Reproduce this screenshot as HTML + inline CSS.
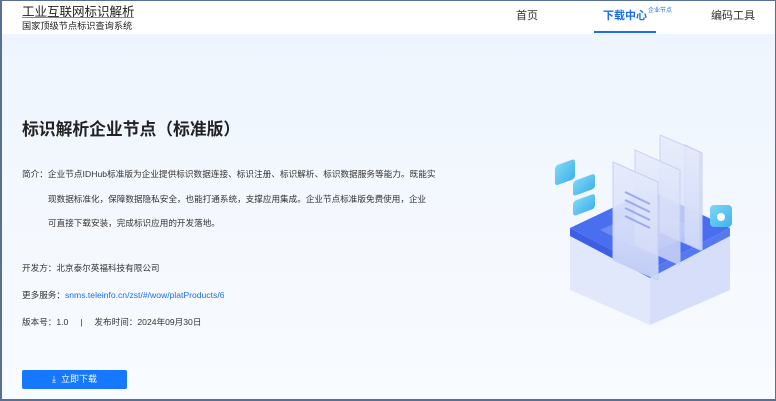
<!DOCTYPE html>
<html><head><meta charset="utf-8"><style>
*{margin:0;padding:0;box-sizing:border-box}
body{width:776px;height:401px;overflow:hidden;font-family:"Liberation Sans","Noto Sans CJK SC",sans-serif;color:#333;position:relative;background:#fff}
.frame{position:absolute;inset:0;border:1px solid #5a6f95;border-left-width:2px;border-bottom-width:2px;pointer-events:none;z-index:10}
.hdr{position:absolute;left:0;top:0;width:776px;height:34px;background:#fff}
.main{position:absolute;left:0;top:34px;width:776px;height:367px;background:linear-gradient(180deg,#eef5fe 0%,#f5f9fe 60%,#f8fbff 100%)}
.t1{position:absolute;left:22px;top:1px;font-size:12.5px;color:#222;white-space:nowrap}
.ln{position:absolute;left:22px;top:17px;width:112px;height:1px;background:#888}
.t2{position:absolute;left:22px;top:18px;font-size:9.2px;color:#222;white-space:nowrap}
.nav{position:absolute;top:7px;font-size:11px;color:#333;white-space:nowrap}
.act{color:#1a6ef5;font-weight:bold}
.sup{position:absolute;left:648px;top:5px;font-size:6px;color:#1a6ef5}
.ul{position:absolute;left:594px;top:31px;width:62px;height:2px;background:#1a6ef5}
.h1{position:absolute;left:22px;top:116px;font-size:16.8px;font-weight:bold;color:#222;white-space:nowrap}
.p{position:absolute;font-size:8.6px;color:#333;white-space:nowrap}
a{color:#1a6ef5;text-decoration:none}
.btn{position:absolute;left:22px;top:370px;width:105px;height:19px;background:#1677ff;border-radius:2px;color:#fff;font-size:9px;text-align:center;line-height:19px}
</style></head><body>
<div class="hdr">
<div class="t1">工业互联网标识解析</div><div class="ln"></div>
<div class="t2">国家顶级节点标识查询系统</div>
<div class="nav" style="left:516px">首页</div>
<div class="nav act" style="left:603px">下载中心</div><div class="sup">企业节点</div>
<div class="ul"></div>
<div class="nav" style="left:711px">编码工具</div>
</div>
<div class="main"></div>
<div class="h1">标识解析企业节点（标准版）</div>
<div class="p" style="left:22px;top:168px;letter-spacing:.05px">简介：企业节点IDHub标准版为企业提供标识数据连接、标识注册、标识解析、标识数据服务等能力。既能实</div>
<div class="p" style="left:48px;top:193px">现数据标准化，保障数据隐私安全，也能打通系统，支撑应用集成。企业节点标准版免费使用，企业</div>
<div class="p" style="left:48px;top:217px">可直接下载安装，完成标识应用的开发落地。</div>
<div class="p" style="left:22px;top:262px">开发方：北京泰尔英福科技有限公司</div>
<div class="p" style="left:22px;top:289px">更多服务：<a>snms.teleinfo.cn/zst/#/wow/platProducts/6</a></div>
<div class="p" style="left:22px;top:316px">版本号：1.0 &nbsp;&nbsp;&nbsp;&nbsp;| &nbsp;&nbsp;&nbsp;&nbsp;发布时间：2024年09月30日</div>
<div class="btn">⤓&nbsp; 立即下载</div>
<svg style="position:absolute;left:530px;top:120px" width="230" height="220" viewBox="0 0 230 220">
<defs>
<linearGradient id="pg" x1="0" y1="0" x2="0" y2="1"><stop offset="0" stop-color="#e6ebfb" stop-opacity=".95"/><stop offset="1" stop-color="#cfd8f7" stop-opacity=".9"/></linearGradient>
<linearGradient id="cy" x1="0" y1="0" x2="1" y2="1"><stop offset="0" stop-color="#7fd6f5"/><stop offset="1" stop-color="#3fb2ee"/></linearGradient>
</defs>
<polygon points="40,115 120,150 120,205 40,170" fill="#e2e8fb"/>
<polygon points="120,150 200,115 200,170 120,205" fill="#d6def9"/>
<polygon points="40,108 120,70 200,108 120,150" fill="#4a6ef0"/>
<polygon points="40,108 120,150 120,158 40,116" fill="#3c5fe6"/>
<polygon points="120,150 200,108 200,116 120,158" fill="#5679f0"/>
<polygon points="70,110 120,88 170,110 120,134" fill="#7f98f4" opacity=".7"/>
<polygon points="155,25 172,33 172,130 155,122" fill="url(#pg)" stroke="#c4cff5"/>
<polygon points="130,15 170,32 170,130 130,112" fill="url(#pg)" stroke="#c4cff5" opacity=".85"/>
<polygon points="105,30 150,50 150,145 105,125" fill="url(#pg)" stroke="#c4cff5" opacity=".9"/>
<polygon points="83,42 128,62 128,160 83,140" fill="url(#pg)" stroke="#c4cff5"/>
<g stroke="#9aaaf0" stroke-width="2"><line x1="95" y1="72" x2="120" y2="84"/><line x1="95" y1="80" x2="120" y2="92"/><line x1="95" y1="88" x2="120" y2="100"/><line x1="95" y1="96" x2="120" y2="108"/></g>
<rect x="25" y="40" width="20" height="20" rx="3" fill="url(#cy)" transform="skewY(-20) translate(0,15)"/>
<rect x="35" y="55" width="22" height="15" rx="3" fill="url(#cy)" transform="skewY(-20) translate(8,22)"/>
<rect x="35" y="75" width="22" height="15" rx="3" fill="url(#cy)" transform="skewY(-20) translate(8,22)"/>
<rect x="180" y="85" width="22" height="22" rx="4" fill="url(#cy)"/>
<circle cx="191" cy="97" r="4" fill="#fff"/>
</svg>
<div class="frame"></div>
</body></html>
